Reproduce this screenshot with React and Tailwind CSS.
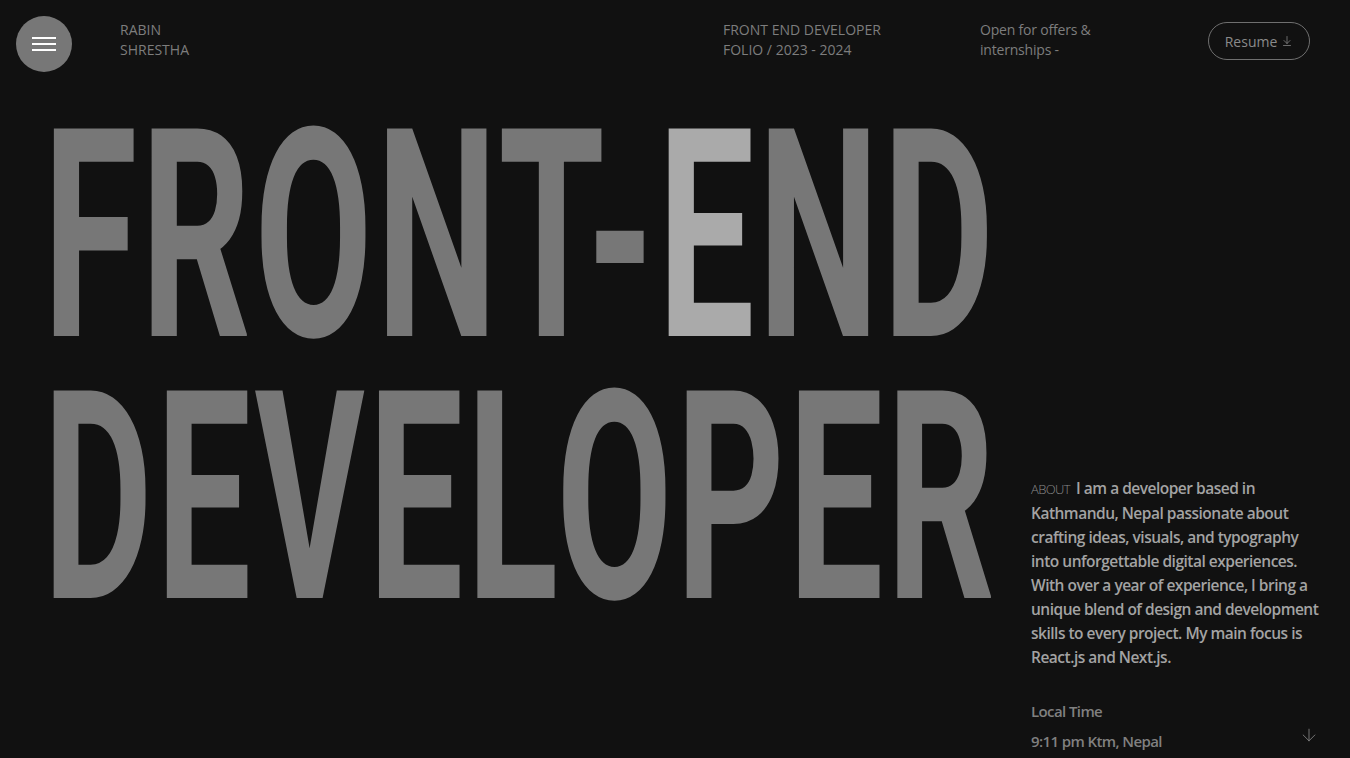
import { ArrowDown, ArrowDownToLine } from 'lucide-react';

// Header link blocks
const HeaderText = ({ lines, className }) => (
  <div className={`text-[14px] leading-[20px] text-[#7d7d7d] ${className}`}>
    {lines.map((line, i) => (
      <p key={i}>{line}</p>
    ))}
  </div>
);

const Header = () => (
  <header className="flex items-start">
    <button className="ml-4 mt-4 w-14 h-14 rounded-full bg-[#777777] flex flex-col items-center justify-center gap-[4px] shrink-0">
      <span className="block w-6 h-[2px] bg-white" />
      <span className="block w-6 h-[2px] bg-white" />
      <span className="block w-6 h-[2px] bg-white" />
    </button>
    <HeaderText className="ml-12 mt-5" lines={['RABIN', 'SHRESTHA']} />
    <div className="ml-auto mr-10 mt-5 flex items-start">
      <HeaderText className="w-[257px]" lines={['FRONT END DEVELOPER', 'FOLIO / 2023 - 2024']} />
      <HeaderText className="w-[228px] tracking-[-0.2px]" lines={['Open for offers &', 'internships -']} />
      <button className="mt-[2px] w-[102px] h-[38px] rounded-full border border-[#6f6f6f] flex items-center justify-center gap-1 text-[14px] text-[#8a8a8a]">
        Resume
        <ArrowDownToLine size={12} strokeWidth={1.5} />
      </button>
    </div>
  </header>
);

// Giant condensed heading
const Hero = () => (
  <div
    className="w-[960px] shrink-0 pl-[43px] mt-[33px] text-[292px] leading-[262px] font-bold text-[#777777]"
    style={{ fontFamily: 'Roboto, "DejaVu Sans", sans-serif' }}
  >
    <div className="h-[262px] whitespace-nowrap">
      <span className="inline-block origin-left scale-x-[0.588] tracking-[6px]">
        FRONT-<span className="text-[#aaaaaa]">E</span>ND
      </span>
    </div>
    <div className="h-[262px] whitespace-nowrap">
      <span className="inline-block origin-left scale-x-[0.578] tracking-[6px]">DEVELOPER</span>
    </div>
  </div>
);

const About = () => (
  <div className="w-[292px] ml-auto mr-[27px] pt-[404px]">
    <p className="text-[15.5px] leading-[24px] tracking-[-0.5px] text-[#a3a3a3] font-semibold">
      <span className="text-[13px] font-light text-[#8a8a8a] tracking-[-0.6px] mr-[6px]">ABOUT</span>
      I am a developer based in Kathmandu, Nepal passionate about crafting ideas, visuals, and typography into
      unforgettable digital experiences. With over a year of experience, I bring a unique blend of design and
      development skills to every project. My main focus is React.js and Next.js.
    </p>
    <p className="mt-[32px] text-[15px] leading-[20px] tracking-[-0.6px] font-semibold text-[#808080]">Local Time</p>
    <div className="mt-[10px] flex items-center justify-between">
      <p className="text-[15px] leading-[20px] tracking-[-0.6px] font-semibold text-[#808080]">9:11 pm Ktm, Nepal</p>
      <ArrowDown size={20} strokeWidth={1} className="text-[#8a8a8a] -mt-[12px] mr-[4px]" />
    </div>
  </div>
);

export default function App() {
  return (
    <div className="w-full h-[758px] overflow-hidden bg-[#111111]" style={{ fontFamily: '"Open Sans", sans-serif' }}>
      <Header />
      <main className="flex">
        <Hero />
        <About />
      </main>
    </div>
  );
}
